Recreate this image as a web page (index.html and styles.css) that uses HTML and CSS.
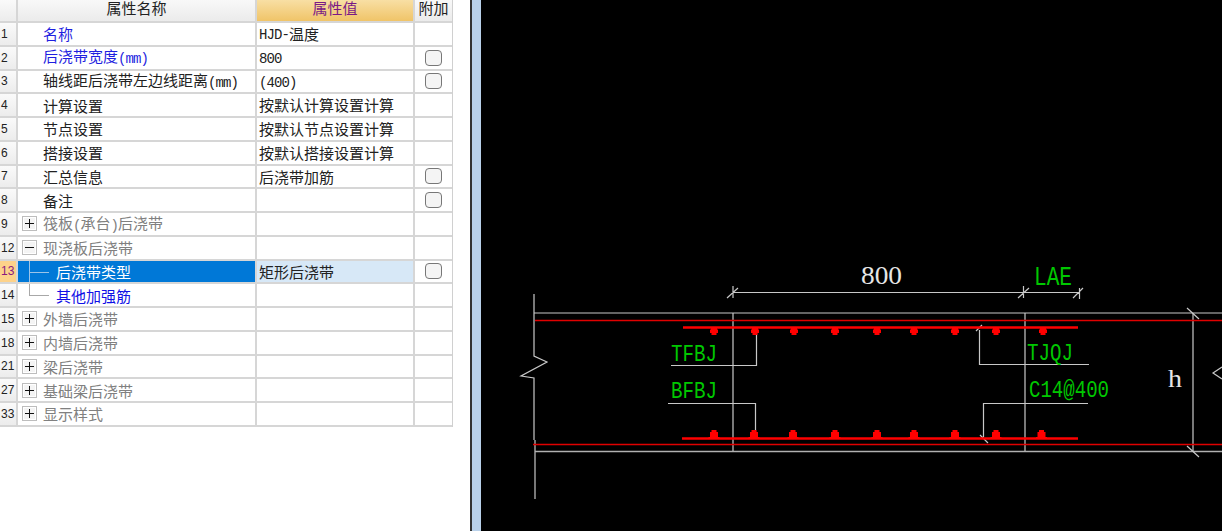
FILE: index.html
```html
<!DOCTYPE html>
<html lang="zh">
<head>
<meta charset="utf-8">
<title>属性</title>
<link rel="stylesheet" href="styles.css">
</head>
<body>
<main class="app">
  <section class="panel">
    <div class="grid">
      <div class="row head">
        <div class="c num"></div><div class="c name">属性名称</div><div class="c val">属性值</div><div class="c add">附加</div>
      </div>
      <div class="row"><div class="c num">1</div><div class="c name blue"><span class="ind">名称</span></div><div class="c val"><span class="lat">HJD-</span>温度</div><div class="c add"></div></div>
      <div class="row"><div class="c num">2</div><div class="c name blue"><span class="ind">后浇带宽度<span class="lat">(mm)</span></span></div><div class="c val"><span class="lat">800</span></div><div class="c add"><i class="chk"></i></div></div>
      <div class="row"><div class="c num">3</div><div class="c name"><span class="ind">轴线距后浇带左边线距离<span class="lat">(mm)</span></span></div><div class="c val"><span class="lat">(400)</span></div><div class="c add"><i class="chk"></i></div></div>
      <div class="row"><div class="c num">4</div><div class="c name"><span class="ind">计算设置</span></div><div class="c val">按默认计算设置计算</div><div class="c add"></div></div>
      <div class="row"><div class="c num">5</div><div class="c name"><span class="ind">节点设置</span></div><div class="c val">按默认节点设置计算</div><div class="c add"></div></div>
      <div class="row"><div class="c num">6</div><div class="c name"><span class="ind">搭接设置</span></div><div class="c val">按默认搭接设置计算</div><div class="c add"></div></div>
      <div class="row"><div class="c num">7</div><div class="c name"><span class="ind">汇总信息</span></div><div class="c val">后浇带加筋</div><div class="c add"><i class="chk"></i></div></div>
      <div class="row"><div class="c num">8</div><div class="c name"><span class="ind">备注</span></div><div class="c val"></div><div class="c add"><i class="chk"></i></div></div>
      <div class="row"><div class="c num">9</div><div class="c name grey"><i class="tog plus"></i><span>筏板<span class="lat">(</span>承台<span class="lat">)</span>后浇带</span></div><div class="c val"></div><div class="c add"></div></div>
      <div class="row"><div class="c num">12</div><div class="c name grey"><i class="tog minus"></i>现浇板后浇带</div><div class="c val"></div><div class="c add"></div></div>
      <div class="row sel"><div class="c num">13</div><div class="c name"><i class="branch tee"></i>后浇带类型</div><div class="c val">矩形后浇带</div><div class="c add"><i class="chk"></i></div></div>
      <div class="row"><div class="c num">14</div><div class="c name blue strong"><i class="branch ell"></i>其他加强筋</div><div class="c val"></div><div class="c add"></div></div>
      <div class="row"><div class="c num">15</div><div class="c name grey"><i class="tog plus"></i>外墙后浇带</div><div class="c val"></div><div class="c add"></div></div>
      <div class="row"><div class="c num">18</div><div class="c name grey"><i class="tog plus"></i>内墙后浇带</div><div class="c val"></div><div class="c add"></div></div>
      <div class="row"><div class="c num">21</div><div class="c name grey"><i class="tog plus"></i>梁后浇带</div><div class="c val"></div><div class="c add"></div></div>
      <div class="row"><div class="c num">27</div><div class="c name grey"><i class="tog plus"></i>基础梁后浇带</div><div class="c val"></div><div class="c add"></div></div>
      <div class="row"><div class="c num">33</div><div class="c name grey"><i class="tog plus"></i>显示样式</div><div class="c val"></div><div class="c add"></div></div>
    </div>
  </section>
  <div class="split"></div>
  <section class="canvas">
    <svg class="cad" viewBox="481 0 741 531" width="741" height="531" xmlns="http://www.w3.org/2000/svg">
      <defs>
        <path id="dot-top" d="M711 328H717V329.500H718V333H716.500V335H711.500V333H710V329.500H711Z"/>
        <path id="dot-bot" d="M711.500 430H716.500V432H718V437H719.500V438H708.500V437H710V432H711.500Z"/>
      </defs>
      <g class="ln">
        <path d="M534 294V356L547 362L521 376L534 378V440"/>
        <path d="M535 440V499"/>
        <path d="M534 313H1222"/>
        <path d="M535 451.500H1222" class="ln2"/>
        <path d="M733 313V451M1025 313V451M1193 313V451"/>
        <path d="M733 292.500H1080"/>
        <path d="M733 286V298M727 298L738 288M1023.500 286V298M1018 298L1029 288M1079.500 288V299M1073 298L1083 288"/>
        <path d="M1187 308L1199 319M1187 446L1199 457"/>
        <path d="M671 365.500H756.500V331"/>
        <path d="M976 331L982 325M979.500 330V364.500H1089"/>
        <path d="M668 403.500H755.500V432"/>
        <path d="M1088 403.500H983.500V437M980 435L988 443"/>
        <path d="M1222 367L1213 373L1222 379"/>
      </g>
      <g class="red-thin">
        <path d="M535 320.500H1222"/>
        <path d="M533 444.500H1222"/>
      </g>
      <g class="red-thick">
        <path d="M683 327.500H1078"/>
        <path d="M682 438.500H1078"/>
      </g>
      <g class="dots">
        <use href="#dot-top"/><use href="#dot-top" x="41"/><use href="#dot-top" x="80"/><use href="#dot-top" x="121"/><use href="#dot-top" x="163"/><use href="#dot-top" x="200"/><use href="#dot-top" x="241"/><use href="#dot-top" x="282"/><use href="#dot-top" x="329"/>
        <use href="#dot-bot"/><use href="#dot-bot" x="40"/><use href="#dot-bot" x="79"/><use href="#dot-bot" x="121"/><use href="#dot-bot" x="163"/><use href="#dot-bot" x="200"/><use href="#dot-bot" x="241"/><use href="#dot-bot" x="282"/><use href="#dot-bot" x="327.500"/>
      </g>
      <text class="t white big" x="861" y="284" textLength="41" lengthAdjust="spacingAndGlyphs">800</text>
      <text class="m green lg" x="1034" y="285" textLength="38" lengthAdjust="spacingAndGlyphs">LAE</text>
      <text class="m green mid" x="671" y="361" textLength="46" lengthAdjust="spacingAndGlyphs">TFBJ</text>
      <text class="m green mid" x="1027" y="360" textLength="46" lengthAdjust="spacingAndGlyphs">TJQJ</text>
      <text class="m green mid" x="671" y="398" textLength="46" lengthAdjust="spacingAndGlyphs">BFBJ</text>
      <text class="m green mid" x="1029" y="397" textLength="80" lengthAdjust="spacingAndGlyphs">C14@400</text>
      <text class="t white big" x="1168" y="387" textLength="14" lengthAdjust="spacingAndGlyphs">h</text>
    </svg>
  </section>
</main>
</body>
</html>
```
FILE: styles.css
```css
* { box-sizing: border-box; }
html, body { margin: 0; height: 100%; background: #fff; overflow: hidden; }
.app { display: flex; width: 1222px; height: 531px; font-family: "Noto Sans CJK SC", "Liberation Sans", sans-serif; }
.panel { width: 470px; background: #fff; flex: none; }
.split { width: 11px; flex: none; background: #b9d1ea; border-left: 2px solid #333; }
.canvas { flex: 1; background: #000; }
.cad { display: block; }

.grid { width: 453px; border-right: 1px solid #d0d0d0; }
.row { position: relative; display: grid; grid-template-columns: 18px 239px 158px 37px; height: 23.75px; border-bottom: 2px solid #d6d6d6; font-size: 15px; line-height: 21px; color: #222; }
.row.head { height: 23px; background: linear-gradient(#f8f8f8, #ebebeb); }
.c { border-right: 2px solid #d6d6d6; overflow: hidden; white-space: nowrap; display: flex; align-items: center; }
.add { border-right: 0; justify-content: center; }
.num { background: linear-gradient(#fafafa, #ececec); font: 12px/1 "Liberation Sans", sans-serif; color: #222; padding-left: 1px; }
.val { display: block; padding-left: 2px; line-height: 21.75px; }
.head .c { display: flex; justify-content: center; align-items: flex-start; padding: 0; line-height: 16px; }
.head .val { background: linear-gradient(#f8dfa4, #f0c468); color: #7a1a86; }
.ind { padding-left: 25px; }
.lat { font-family: "Liberation Mono", monospace; font-size: 14px; letter-spacing: -0.9px; vertical-align: -0.5px; }
.val .lat { vertical-align: 1.5px; }
.blue { color: #1f1fe0; }
.strong { color: #1010e6; }
.grey { color: #808080; padding-left: 4px; }
.sel .num { background: #fdd28a; color: #8a1a80; }
.sel .name { background: #0078d7; color: #fff; }
.sel .val { background: #d7e8f7; }
.chk { display: block; width: 17px; height: 16px; background: #f4f4f4; border: 1px solid #777; border-radius: 4px; }
.tog { position: relative; display: block; flex: none; width: 15px; height: 15px; margin-right: 6px; background: #f4f4f4; border: 1px solid #bdbdbd; box-shadow: inset 0 0 0 1px #fff; }
.tog::before { content: ""; position: absolute; left: 2px; right: 2px; top: 6px; height: 1px; background: #111; }
.tog.plus::after { content: ""; position: absolute; top: 2px; bottom: 2px; left: 6px; width: 1px; background: #111; }
.branch { position: relative; display: block; flex: none; align-self: stretch; width: 38px; }
.branch::before { content: ""; position: absolute; left: 12px; width: 19px; top: 11px; height: 1px; background: #a8a8a8; }
.branch::after { content: ""; position: absolute; left: 11px; width: 1px; top: -4px; background: #a8a8a8; }
.tee::after { bottom: -3px; }
.ell::after { height: 16px; }
.sel .branch::before, .sel .branch::after { background: #9cc4e8; }

.ln { fill: none; stroke: #c8c8c8; stroke-width: 1.2; }
.ln .ln2 { stroke-width: 1.6; stroke: #b0b0b0; }
.red-thin { fill: none; stroke: #e00000; stroke-width: 1.5; }
.red-thick { fill: none; stroke: #ff0000; stroke-width: 2.4; }
.dots { fill: #ff0000; }
.t { font-family: "Liberation Serif", serif; }
.m { font-family: "Liberation Mono", monospace; }
.big { font-size: 25px; }
.lg { font-size: 27px; }
.mid { font-size: 23px; }
.white { fill: #e6e6e6; }
.green { fill: #00c800; }
```
